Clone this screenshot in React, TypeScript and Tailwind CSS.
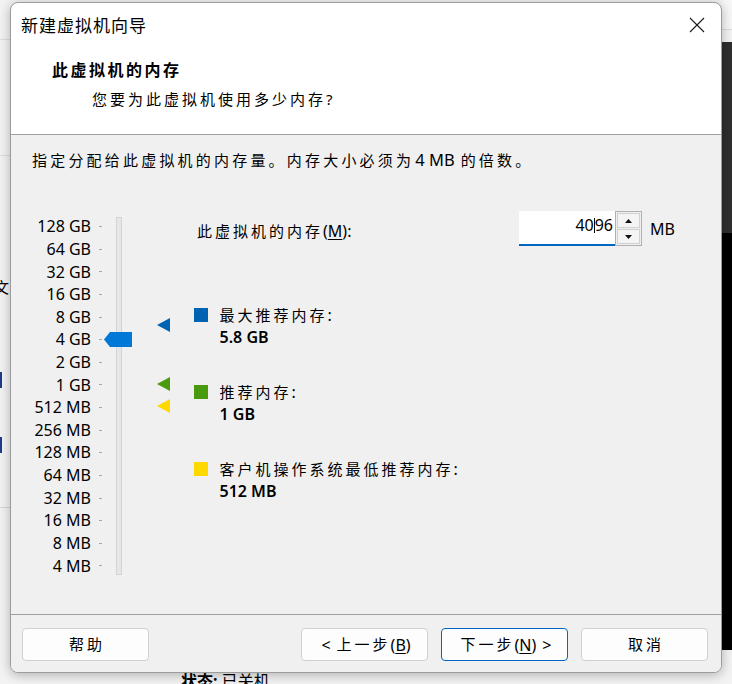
import { ReactNode } from "react";

const Cjk = ({
  children,
  className = "text-[15px]",
  track = "tracking-[3px]",
}: {
  children: ReactNode;
  className?: string;
  track?: string;
}) => <span className={`font-['Noto_Sans_CJK_SC',sans-serif] ${track} ${className}`}>{children}</span>;

const sizes = [
  "128 GB", "64 GB", "32 GB", "16 GB", "8 GB", "4 GB", "2 GB", "1 GB",
  "512 MB", "256 MB", "128 MB", "64 MB", "32 MB", "16 MB", "8 MB", "4 MB",
];

const legend = [
  { color: "bg-[#0063b1]", label: "最大推荐内存", value: "5.8 GB" },
  { color: "bg-[#4a9a0f]", label: "推荐内存", value: "1 GB" },
  { color: "bg-[#ffd800]", label: "客户机操作系统最低推荐内存", value: "512 MB" },
];

const Marker = ({ color }: { color: string }) => (
  <svg width="13" height="14" viewBox="0 0 13 14">
    <polygon points="0,7 13,0 13,14" fill={color} />
  </svg>
);

const Arrow = ({ up }: { up?: boolean }) => (
  <svg width="7" height="4" viewBox="0 0 7 4">
    <polygon points={up ? "0,4 3.5,0 7,4" : "0,0 7,0 3.5,4"} fill="#111" />
  </svg>
);

const WizardButton = ({ children, primary }: { children: ReactNode; primary?: boolean }) => (
  <button
    className={`w-[127px] h-[33px] rounded-[4px] border bg-[#fdfdfd] flex items-center justify-center pl-[3px] whitespace-nowrap ${
      primary ? "border-[#0067c0]" : "border-[#d0d0d0]"
    }`}
  >
    {children}
  </button>
);

export default function App() {
  return (
    <div className="relative w-[732px] h-[684px] overflow-hidden bg-[#f3f3f3] text-black font-['Noto_Sans','Noto_Sans_CJK_SC',sans-serif]">
      {/* app window behind the wizard */}
      <div className="flex h-[673px]">
        <div className="w-[10px] flex flex-col overflow-hidden">
          <div className="h-[40px] border-b border-[#dedede] shrink-0" />
          <div className="h-[116px] border-b border-[#dedede] shrink-0" />
          <div className="h-[120px] shrink-0" />
          <div className="h-[22px] shrink-0 text-[15px] leading-[22px] whitespace-nowrap -ml-[6px] font-['Noto_Sans_CJK_SC',sans-serif]">文</div>
          <div className="h-[74px] shrink-0" />
          <div className="h-[16px] w-[2px] bg-[#1c3c8c] shrink-0" />
          <div className="h-[49px] shrink-0" />
          <div className="h-[16px] w-[2px] bg-[#1c3c8c] shrink-0" />
          <div className="h-[55px] border-b border-[#d6d6d6] shrink-0" />
          <div className="flex-1" />
        </div>
        <div className="flex-1" />
        <div className="w-[10px] flex flex-col">
          <div className="h-[30px] border-b border-[#dcdcdc] bg-[#f7f7f7] shrink-0" />
          <div className="h-[12px] bg-[#f3f3f3] shrink-0" />
          <div className="h-[191px] bg-[#2f2f2f] shrink-0" />
          <div className="h-[417px] bg-black shrink-0" />
          <div className="flex-1 bg-[#f3f3f3]" />
        </div>
      </div>
      <div className="h-[11px] overflow-hidden pl-[181px] text-[16px] leading-[16px] whitespace-nowrap">
        <span className="font-bold">状态:</span> 已关机
      </div>

      {/* wizard dialog */}
      <div className="absolute left-[10px] top-[2px] w-[712px] flex flex-col rounded-[8px] border border-[#9c9c9c] bg-white overflow-hidden shadow-[0_2px_12px_rgba(0,0,0,0.28)]">
        <div className="h-[43px] flex items-center justify-between pl-[10px] pr-[16px]">
          <Cjk className="text-[17px]" track="tracking-[1px]">新建虚拟机向导</Cjk>
          <svg width="16" height="16" viewBox="0 0 16 16">
            <path d="M1 1L15 15M15 1L1 15" stroke="#1a1a1a" strokeWidth="1.1" />
          </svg>
        </div>

        <div className="h-[89px] border-b border-[#a0a0a0] pl-[41px] pt-[13px]">
          <div className="leading-[20px]">
            <Cjk className="text-[16px] font-bold" track="tracking-[2.5px]">此虚拟机的内存</Cjk>
          </div>
          <div className="mt-[9px] pl-[40px] leading-[20px]">
            <Cjk>您要为此虚拟机使用多少内存</Cjk>
            <span className="text-[15px]">?</span>
          </div>
        </div>

        <div className="h-[479px] bg-[#f0f0f0] flex flex-col">
          <div className="pl-[21px] pt-[14px] leading-[22px] whitespace-nowrap">
            <Cjk track="tracking-[3.2px]">指定分配给此虚拟机的内存量。内存大小必须为</Cjk>
            <span className="text-[16.5px] ml-[1px] mr-[6px]">4 MB</span>
            <Cjk track="tracking-[3.2px]">的倍数。</Cjk>
          </div>

          <div className="mt-[40px] flex">
            <div className="w-[92px] mt-[4.4px] flex flex-col">
              {sizes.map((s) => (
                <div key={s} className="h-[22.62px] flex items-center justify-end text-[16px] leading-[22.62px] whitespace-nowrap">
                  <span>{s}</span>
                  <span className="ml-[8px] mr-[1px] w-[3px] h-px bg-[#a8a8a8]" />
                </div>
              ))}
            </div>

            <div className="relative w-[91px] mt-[4.4px]">
              <div className="ml-[13px] mt-[1.6px] w-[6px] h-[358px] bg-[#e6e6e6] border border-[#d4d4d4]" />
              <svg className="absolute left-[1px] top-[116.6px]" width="28" height="15" viewBox="0 0 28 15">
                <polygon points="0,7.5 6,0 28,0 28,15 6,15" fill="#0078d7" />
              </svg>
              <div className="absolute left-[54px] top-[102.6px]">
                <Marker color="#0063b1" />
              </div>
              <div className="absolute left-[54px] top-[161.3px]">
                <Marker color="#4a9a0f" />
              </div>
              <div className="absolute left-[54px] top-[183.3px]">
                <Marker color="#ffd800" />
              </div>
            </div>

            <div className="flex flex-col">
              <div className="h-[35px] flex items-center">
                <div className="w-[325px] pl-[3px] pt-[4px] whitespace-nowrap">
                  <Cjk>此虚拟机的内存</Cjk>
                  <span className="text-[16px]">
                    (<span className="underline underline-offset-2">M</span>):
                  </span>
                </div>
                <div className="w-[96px] h-[35px] bg-white border-b-2 border-[#0067c0] flex items-center justify-end pr-[2px] pb-[5px] text-[16px]">
                  <span>40</span>
                  <span className="inline-block w-px h-[15px] bg-black" />
                  <span>96</span>
                </div>
                <div className="w-[27px] h-[35px] border border-[#b0b0b0] bg-[#f0f0f0] flex flex-col p-px gap-px">
                  <div className="flex-1 border border-[#d0d0d0] bg-[#f4f4f4] flex items-center justify-center">
                    <Arrow up />
                  </div>
                  <div className="flex-1 border border-[#d0d0d0] bg-[#f4f4f4] flex items-center justify-center">
                    <Arrow />
                  </div>
                </div>
                <span className="ml-[8px] text-[16px]">MB</span>
              </div>

              <div className="mt-[57px] flex flex-col gap-[31px]">
                {legend.map((l) => (
                  <div key={l.label} className="flex">
                    <div className={`w-[14px] h-[14px] mt-[4.5px] ${l.color}`} />
                    <div className="ml-[11.5px] flex flex-col whitespace-nowrap">
                      <div className="h-[23px] leading-[23px]">
                        <Cjk>{l.label}</Cjk>
                        <span className="text-[16px]">:</span>
                      </div>
                      <div className="h-[23px] leading-[23px] text-[16px] font-semibold">{l.value}</div>
                    </div>
                  </div>
                ))}
              </div>
            </div>
          </div>
        </div>

        <div className="border-t border-[#a0a0a0] bg-[#f0f0f0] pt-[13px] pb-[11px] pl-[11px] pr-[13px] flex">
          <WizardButton>
            <Cjk>帮助</Cjk>
          </WizardButton>
          <div className="ml-auto flex gap-[13px]">
            <WizardButton>
              <span className="text-[16px] mr-[6px]">&lt;</span>
              <Cjk>上一步</Cjk>
              <span className="text-[16px]">
                (<span className="underline underline-offset-2">B</span>)
              </span>
            </WizardButton>
            <WizardButton primary>
              <Cjk>下一步</Cjk>
              <span className="text-[16px]">
                (<span className="underline underline-offset-2">N</span>)
              </span>
              <span className="text-[16px] ml-[6px]">&gt;</span>
            </WizardButton>
            <WizardButton>
              <Cjk>取消</Cjk>
            </WizardButton>
          </div>
        </div>
      </div>
    </div>
  );
}
